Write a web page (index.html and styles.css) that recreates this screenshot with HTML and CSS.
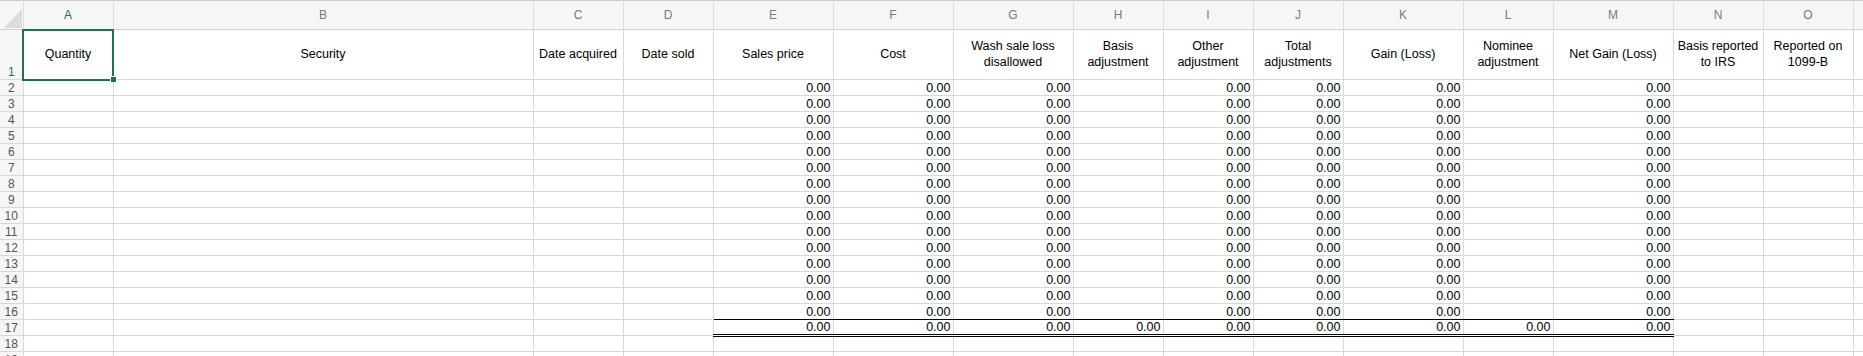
FILE: index.html
```html
<!DOCTYPE html>
<html lang="en">
<head>
  <meta charset="UTF-8" />
  <title>Capital gains worksheet</title>
  <link rel="stylesheet" href="styles.css">
</head>
<body>

<table class="sheet">
  <colgroup>
    <col class="c-row"><col class="c-90"><col class="c-sec"><col class="c-90"><col class="c-90">
    <col class="c-120"><col class="c-120"><col class="c-120"><col class="c-90"><col class="c-90">
    <col class="c-90"><col class="c-120"><col class="c-90"><col class="c-120"><col class="c-90">
    <col class="c-90"><col class="c-90">
  </colgroup>
  <thead>
    <tr>
      <th class="corner"><svg width="20" height="22" viewBox="0 0 20 22"><polygon points="19,2 19,21 1,21" fill="#dcdcdc"/></svg></th>
      <th class="active">A</th><th>B</th><th>C</th><th>D</th><th>E</th><th>F</th><th>G</th><th>H</th>
      <th>I</th><th>J</th><th>K</th><th>L</th><th>M</th><th>N</th><th>O</th><th></th>
    </tr>
  </thead>
  <tbody>
    <!-- column titles -->
    <tr class="titles">
      <th class="active">1</th>
      <td class="selected">Quantity<span class="handle"></span></td>
      <td>Security</td>
      <td>Date acquired</td>
      <td>Date sold</td>
      <td>Sales price</td>
      <td>Cost</td>
      <td>Wash sale loss disallowed</td>
      <td>Basis adjustment</td>
      <td>Other adjustment</td>
      <td>Total adjustments</td>
      <td>Gain (Loss)</td>
      <td>Nominee adjustment</td>
      <td>Net Gain (Loss)</td>
      <td>Basis reported to IRS</td>
      <td>Reported on 1099-B</td>
      <td></td>
    </tr>
    <tr><th>2</th><td></td><td></td><td></td><td></td><td>0.00</td><td>0.00</td><td>0.00</td><td></td><td>0.00</td><td>0.00</td><td>0.00</td><td></td><td>0.00</td><td></td><td></td><td></td></tr>
    <tr><th>3</th><td></td><td></td><td></td><td></td><td>0.00</td><td>0.00</td><td>0.00</td><td></td><td>0.00</td><td>0.00</td><td>0.00</td><td></td><td>0.00</td><td></td><td></td><td></td></tr>
    <tr><th>4</th><td></td><td></td><td></td><td></td><td>0.00</td><td>0.00</td><td>0.00</td><td></td><td>0.00</td><td>0.00</td><td>0.00</td><td></td><td>0.00</td><td></td><td></td><td></td></tr>
    <tr><th>5</th><td></td><td></td><td></td><td></td><td>0.00</td><td>0.00</td><td>0.00</td><td></td><td>0.00</td><td>0.00</td><td>0.00</td><td></td><td>0.00</td><td></td><td></td><td></td></tr>
    <tr><th>6</th><td></td><td></td><td></td><td></td><td>0.00</td><td>0.00</td><td>0.00</td><td></td><td>0.00</td><td>0.00</td><td>0.00</td><td></td><td>0.00</td><td></td><td></td><td></td></tr>
    <tr><th>7</th><td></td><td></td><td></td><td></td><td>0.00</td><td>0.00</td><td>0.00</td><td></td><td>0.00</td><td>0.00</td><td>0.00</td><td></td><td>0.00</td><td></td><td></td><td></td></tr>
    <tr><th>8</th><td></td><td></td><td></td><td></td><td>0.00</td><td>0.00</td><td>0.00</td><td></td><td>0.00</td><td>0.00</td><td>0.00</td><td></td><td>0.00</td><td></td><td></td><td></td></tr>
    <tr><th>9</th><td></td><td></td><td></td><td></td><td>0.00</td><td>0.00</td><td>0.00</td><td></td><td>0.00</td><td>0.00</td><td>0.00</td><td></td><td>0.00</td><td></td><td></td><td></td></tr>
    <tr><th>10</th><td></td><td></td><td></td><td></td><td>0.00</td><td>0.00</td><td>0.00</td><td></td><td>0.00</td><td>0.00</td><td>0.00</td><td></td><td>0.00</td><td></td><td></td><td></td></tr>
    <tr><th>11</th><td></td><td></td><td></td><td></td><td>0.00</td><td>0.00</td><td>0.00</td><td></td><td>0.00</td><td>0.00</td><td>0.00</td><td></td><td>0.00</td><td></td><td></td><td></td></tr>
    <tr><th>12</th><td></td><td></td><td></td><td></td><td>0.00</td><td>0.00</td><td>0.00</td><td></td><td>0.00</td><td>0.00</td><td>0.00</td><td></td><td>0.00</td><td></td><td></td><td></td></tr>
    <tr><th>13</th><td></td><td></td><td></td><td></td><td>0.00</td><td>0.00</td><td>0.00</td><td></td><td>0.00</td><td>0.00</td><td>0.00</td><td></td><td>0.00</td><td></td><td></td><td></td></tr>
    <tr><th>14</th><td></td><td></td><td></td><td></td><td>0.00</td><td>0.00</td><td>0.00</td><td></td><td>0.00</td><td>0.00</td><td>0.00</td><td></td><td>0.00</td><td></td><td></td><td></td></tr>
    <tr><th>15</th><td></td><td></td><td></td><td></td><td>0.00</td><td>0.00</td><td>0.00</td><td></td><td>0.00</td><td>0.00</td><td>0.00</td><td></td><td>0.00</td><td></td><td></td><td></td></tr>
    <tr class="before-sum"><th>16</th><td></td><td></td><td></td><td></td><td>0.00</td><td>0.00</td><td>0.00</td><td></td><td>0.00</td><td>0.00</td><td>0.00</td><td></td><td>0.00</td><td></td><td></td><td></td></tr>
    <!-- totals -->
    <tr class="totals"><th>17</th><td></td><td></td><td></td><td></td><td class="sum">0.00</td><td class="sum">0.00</td><td class="sum">0.00</td><td class="sum">0.00</td><td class="sum">0.00</td><td class="sum">0.00</td><td class="sum">0.00</td><td class="sum">0.00</td><td class="sum">0.00</td><td></td><td></td><td></td></tr>
    <tr><th>18</th><td></td><td></td><td></td><td></td><td></td><td></td><td></td><td></td><td></td><td></td><td></td><td></td><td></td><td></td><td></td><td></td></tr>
    <tr><th>19</th><td></td><td></td><td></td><td></td><td></td><td></td><td></td><td></td><td></td><td></td><td></td><td></td><td></td><td></td><td></td><td></td></tr>
  </tbody>
</table>

</body>
</html>
```

FILE: styles.css
```css
* {
  margin: 0;
  padding: 0;
  box-sizing: border-box;
}

html, body {
  height: 100%;
  background-color: #fff;
  overflow: hidden;
  font-family: 'Liberation Sans', Arial, sans-serif;
}

.sheet {
  border-collapse: collapse;
  table-layout: fixed;
  width: 1943px;
}

.c-row { width: 23px; }
.c-90  { width: 90px; }
.c-120 { width: 120px; }
.c-sec { width: 420px; }

/* column letters */
.sheet thead th {
  height: 29px;
  background-color: #f6f6f6;
  border-top: 1px solid #c9c9c9;
  border-bottom: 1px solid #d2d2d2;
  border-left: 1px solid #dedede;
  border-right: 1px solid #dedede;
  color: #7a7a7a;
  font-size: 12px;
  font-weight: normal;
  text-align: center;
  vertical-align: middle;
}

.sheet thead th.corner {
  border-left: none;
  text-align: right;
  vertical-align: bottom;
  line-height: 0;
}

.corner svg {
  display: inline-block;
}

/* row numbers */
.sheet tbody th {
  height: 16px;
  background-color: #f6f6f6;
  border: 1px solid #d9d9d9;
  border-left: none;
  color: #555;
  font-size: 12px;
  font-weight: normal;
  line-height: 13px;
  text-align: center;
  vertical-align: bottom;
}

.sheet th.active {
  color: #217346;
}

.sheet td {
  height: 16px;
  border: 1px solid #d9d9d9;
  padding: 0 2px;
  color: #000;
  font-size: 12.5px;
  line-height: 14px;
  text-align: right;
  vertical-align: bottom;
  white-space: nowrap;
  overflow: hidden;
}

.titles td, .titles th {
  height: 50px;
}

.titles th {
  line-height: 12px;
}

.titles td {
  padding: 0 3px;
  line-height: 15.5px;
  text-align: center;
  vertical-align: middle;
  white-space: normal;
  overflow: visible;
}

/* selected cell A1 */
.titles td.selected {
  position: relative;
  outline: 2px solid #217346;
  outline-offset: -1px;
}

.handle {
  position: absolute;
  right: -3px;
  bottom: -3px;
  width: 6px;
  height: 6px;
  background-color: #217346;
  border: 1px solid #fff;
  border-right: none;
  border-bottom: none;
}

/* total line: the row above carries the single rule */
.before-sum td:nth-child(n+6):nth-child(-n+14) {
  border-bottom: 1px solid #000;
}

.totals th, .totals td {
  height: 15px;
  line-height: 13px;
}

.sheet td.sum {
  border-top: 1px solid #000;
  border-bottom: 3px double #000;
}
```
